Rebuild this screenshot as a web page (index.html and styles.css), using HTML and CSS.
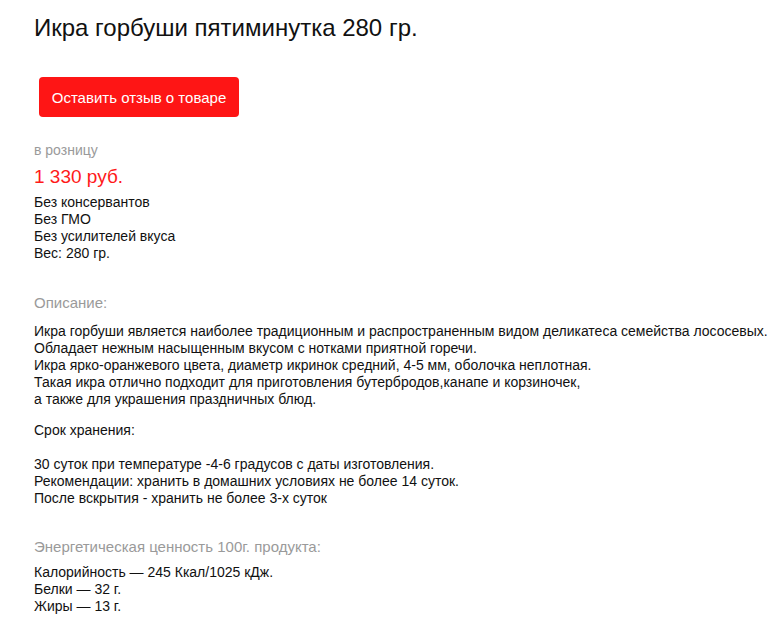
FILE: index.html
```html
<!DOCTYPE html>
<html lang="ru">
<head>
<meta charset="utf-8">
<link rel="stylesheet" href="styles.css">
</head>
<body>
<div class="page">
  <h1 class="title">Икра горбуши пятиминутка 280 гр.</h1>
  <button class="review-btn">Оставить отзыв о товаре</button>
  <div class="label">в розницу</div>
  <div class="price">1 330 руб.</div>
  <div class="props">Без консервантов<br>Без ГМО<br>Без усилителей вкуса<br>Вес: 280 гр.</div>
  <div class="section-title narrow">Описание:</div>
  <div class="desc narrow">Икра горбуши является наиболее традиционным и распространенным видом деликатеса семейства лососевых.<br>Обладает нежным насыщенным вкусом с нотками приятной горечи.<br>Икра ярко-оранжевого цвета, диаметр икринок средний, 4-5 мм, оболочка неплотная.<br>Такая икра отлично подходит для приготовления бутербродов,канапе и корзиночек,<br>а также для украшения праздничных блюд.</div>
  <div class="storage">Срок хранения:<br><br>30 суток при температуре -4-6 градусов с даты изготовления.<br>Рекомендации: хранить в домашних условиях не более 14 суток.<br>После вскрытия - хранить не более 3-х суток</div>
  <div class="section-title energy">Энергетическая ценность 100г. продукта:</div>
  <div class="props">Калорийность — 245 Ккал/1025 кДж.<br>Белки — 32 г.<br>Жиры — 13 г.</div>
</div>
</body>
</html>
```
FILE: styles.css
```css
html, body {
  margin: 0;
  padding: 0;
  background: #fff;
}
body {
  font-family: "Liberation Sans", Arial, sans-serif;
  color: #111;
}
.page {
  padding: 0 0 0 34px;
  display: flex;
  flex-direction: column;
  align-items: flex-start;
}
.title {
  margin: 12px 0 0;
  font-size: 24px;
  font-weight: normal;
  line-height: 32px;
  color: #111;
}
.review-btn {
  margin: 33px 0 0 5px;
  width: 200px;
  height: 40px;
  background: #fe1515;
  border: none;
  border-radius: 4px;
  color: #fff;
  font-family: "Liberation Sans", Arial, sans-serif;
  font-size: 15px;
  padding: 0;
}
.label {
  margin-top: 25px;
  font-size: 14px;
  line-height: 17px;
  color: #9a9a9a;
}
.price {
  margin-top: 7px;
  font-size: 19px;
  line-height: 22px;
  color: #ff1a1a;
}
.props {
  margin-top: 6px;
  font-size: 14px;
  line-height: 17px;
}
.narrow {
  font-family: "Liberation Sans Narrow", "Arial Narrow", "Liberation Sans", sans-serif;
  font-stretch: condensed;
}
.section-title {
  margin-top: 32px;
  font-size: 15px;
  line-height: 18px;
  color: #9a9a9a;
}
.desc {
  margin-top: 11px;
  font-size: 14px;
  line-height: 17px;
  white-space: nowrap;
}
.storage {
  margin-top: 14px;
  font-size: 14px;
  line-height: 17px;
}
.energy {
  margin-top: 31px;
}
.energy + .props {
  margin-top: 8px;
}
```
